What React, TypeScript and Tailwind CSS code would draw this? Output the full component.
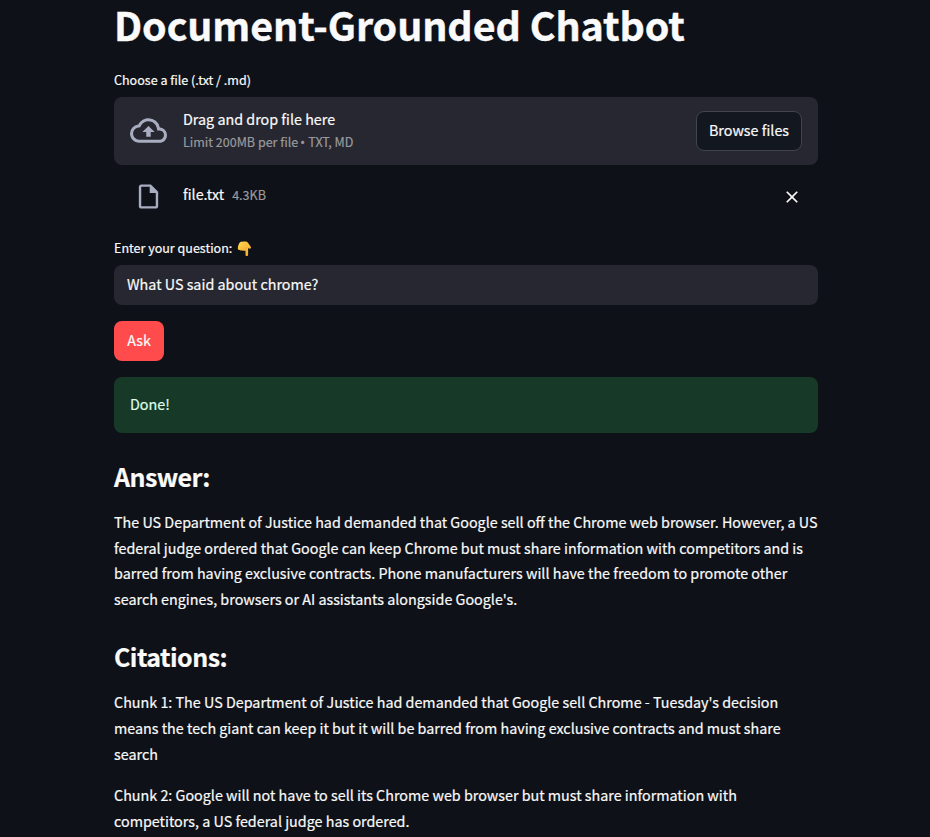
import { MdClose, MdOutlineBackup, MdOutlineInsertDriveFile } from "react-icons/md";

function PointingDown() {
  return (
    <svg width="15" height="16" viewBox="0 0 15 16" aria-label="Pointing down">
      <defs>
        <linearGradient id="skin" x1="0" y1="0" x2="1" y2="1">
          <stop offset="0" stopColor="#ffd84f" />
          <stop offset="1" stopColor="#f9a52b" />
        </linearGradient>
      </defs>
      <path
        fill="url(#skin)"
        d="M3.4 1C4.5.4 7.8.2 9.2.6c1.3.4 1.9 1.5 2.8 2.7l1.6 2.1c.6.9.4 1.7-.2 2.1-.7.4-1.5.1-2.3-.6v6.900c0 .8-.5 1.300-1.300 1.300s-1.300-.5-1.300-1.300V9.600c-.7.3-1.300.2-1.800-.2-.6.4-1.400.4-1.900-.1-.7.3-1.500.1-1.900-.4C1.500 9 .8 8.300.800 7.400c0-2.200 1.100-5.500 2.600-6.400z"
      />
      <path
        fill="none"
        stroke="#eda640"
        strokeWidth="0.5"
        strokeLinecap="round"
        d="M2.900 8.600V6.800M4.900 9V6.800M6.700 9V6.800M8.500 9.300V6.900l2.400.1"
      />
    </svg>
  );
}

function Paragraph({ lines }: { lines: string[] }) {
  return (
    <p className="text-[14.33px] leading-[25.6px] whitespace-nowrap">
      {lines.map((line) => (
        <span key={line} className="block">
          <span>{line}</span>
        </span>
      ))}
    </p>
  );
}

export default function App() {
  return (
    <div className="h-[837px] overflow-hidden bg-[#0e1117] pl-[114px] font-['Noto_Sans_CJK_SC','Noto_Sans',sans-serif] text-[#fafafa] [-webkit-text-stroke:0.2px]">
      <main className="flex w-[704px] flex-col">
        <h1 className="h-[53px] text-[39.4px] leading-[47px] font-bold tracking-[-0.07px] whitespace-nowrap [-webkit-text-stroke:0.4px]">
          <span>Document-Grounded Chatbot</span>
        </h1>
        <label className="mt-4 h-7 text-[12.54px] leading-[22px] whitespace-nowrap">
          <span>Choose a file (.txt / .md)</span>
        </label>
        <section className="flex h-[68px] items-center rounded-lg bg-[#262730] px-4">
          <MdOutlineBackup className="mr-4 mb-px size-[37px] shrink-0 text-[#a9adc0]" />
          <div className="flex flex-1 flex-col pb-0.5 whitespace-nowrap">
            <span className="text-[14.33px] leading-6">Drag and drop file here</span>
            <span className="text-[12.54px] leading-[21px] text-[#9a9a9c]">
              Limit 200MB per file{" "}
              <span className="-ml-px mr-[0.5px] font-['Noto_Sans']">•</span> TXT, MD
            </span>
          </div>
          <button className="h-10 w-[106px] rounded-lg border border-[#41444c] bg-[#131720] pb-0.5 text-[14.33px] whitespace-nowrap">
            Browse files
          </button>
        </section>
        <div className="flex h-[62px] items-center pr-4 pl-5">
          <MdOutlineInsertDriveFile className="mr-5 size-[29px] shrink-0 text-[#a9adc0]" />
          <span className="mr-2 mb-[5px] text-[14.33px]">file.txt</span>
          <span className="mb-0.5 flex-1 text-[12.54px] text-[#9a9a9c]">4.3KB</span>
          <MdClose className="mt-0.5 size-5" />
        </div>
        <label className="mt-[10px] flex h-7 items-start text-[12.54px] leading-[22px] whitespace-nowrap">
          <span className="mr-[5px]">Enter your question:</span>
          <span className="mt-1"><PointingDown /></span>
        </label>
        <div className="flex h-10 items-center rounded-lg bg-[#262730] px-[13px] pb-0.5 text-[14.33px]">
          <span>What US said about chrome?</span>
        </div>
        <button className="mt-4 h-10 w-[50px] rounded-lg bg-[#ff4b4b] pb-0.5 text-[14.33px]">Ask</button>
        <div className="mt-4 flex h-14 items-center rounded-lg bg-[#173928] px-4 pb-0.5 text-[14.33px] text-[#dffde9]">
          <span>Done!</span>
        </div>
        <h2 className="mt-[26px] mb-[16.3px] h-[34px] text-[25px] leading-[34px] font-bold tracking-[-0.55px]"><span>Answer:</span></h2>
        <Paragraph
          lines={[
            "The US Department of Justice had demanded that Google sell off the Chrome web browser. However, a US",
            "federal judge ordered that Google can keep Chrome but must share information with competitors and is",
            "barred from having exclusive contracts. Phone manufacturers will have the freedom to promote other",
            "search engines, browsers or AI assistants alongside Google's.",
          ]}
        />
        <h2 className="mt-[27.7px] mb-4 h-[34px] text-[25px] leading-[34px] font-bold tracking-[-0.55px]"><span>Citations:</span></h2>
        <div className="flex flex-col gap-4">
          <Paragraph
            lines={[
              "Chunk 1: The US Department of Justice had demanded that Google sell Chrome - Tuesday's decision",
              "means the tech giant can keep it but it will be barred from having exclusive contracts and must share",
              "search",
            ]}
          />
          <Paragraph
            lines={[
              "Chunk 2: Google will not have to sell its Chrome web browser but must share information with",
              "competitors, a US federal judge has ordered.",
            ]}
          />
        </div>
      </main>
    </div>
  );
}
